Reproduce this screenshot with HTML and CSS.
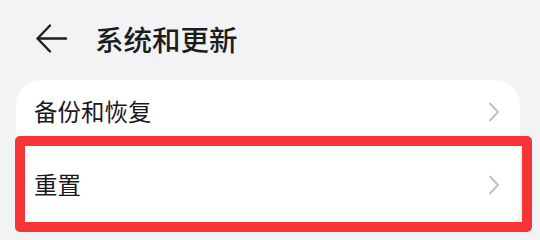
FILE: index.html
```html
<!DOCTYPE html>
<html lang="zh-CN">
<head>
<meta charset="utf-8">
<link rel="stylesheet" href="styles.css">
</head>
<body>
<header class="topbar">
  <svg class="back" width="32" height="30" viewBox="0 0 32 30" fill="none" stroke="#1f1f1f" stroke-width="2.4" stroke-linecap="round" stroke-linejoin="round">
    <path d="M2 14.5 H30"/>
    <path d="M14 1.5 L1.5 14.5 L14 27.5"/>
  </svg>
  <h1 class="title">系统和更新</h1>
</header>
<section class="card">
  <div class="row row-first">
    <span class="label">备份和恢复</span>
    <svg class="chev" width="12" height="20" viewBox="0 0 12 20" fill="none" stroke="#c2c2c2" stroke-width="2" stroke-linecap="round" stroke-linejoin="round"><path d="M2 1.5 L10 10 L2 18.5"/></svg>
  </div>
  <div class="row row-second">
    <span class="label">重置</span>
    <svg class="chev" width="12" height="20" viewBox="0 0 12 20" fill="none" stroke="#c2c2c2" stroke-width="2" stroke-linecap="round" stroke-linejoin="round"><path d="M2 1.5 L10 10 L2 18.5"/></svg>
  </div>
  <div class="highlight"></div>
</section>
</body>
</html>
```
FILE: styles.css
```css
html, body {
  margin: 0;
  padding: 0;
}
body {
  width: 540px;
  height: 240px;
  overflow: hidden;
  background: #f1f3f5;
  font-family: "Noto Sans CJK SC", "Noto Sans", sans-serif;
  color: #1a1a1a;
}
.topbar {
  height: 80px;
  display: flex;
  align-items: center;
  padding-left: 36px;
  box-sizing: border-box;
}
.back {
  display: block;
  margin-top: -2px;
}
.title {
  margin: 0 0 0 27px;
  font-size: 28.5px;
  font-weight: 500;
  line-height: 1;
  color: #1c1c1c;
  margin-top: -2px;
}
.card {
  position: relative;
  margin: 0 20px 0 16px;
  background: #ffffff;
  border-radius: 24px;
  height: 152px;
}
.row {
  display: flex;
  align-items: center;
  justify-content: space-between;
  padding: 0 20px 0 18px;
}
.row-first {
  height: 64px;
  box-shadow: inset 0 -1px 0 #f6f6f6;
}
.row-second {
  height: 82px;
}
.label {
  font-size: 23.5px;
  line-height: 1;
  color: #1a1a1a;
}
.chev {
  display: block;
}
.highlight {
  position: absolute;
  left: -1px;
  top: 56px;
  width: 517px;
  height: 96px;
  box-sizing: border-box;
  border: 10px solid #f73538;
  border-radius: 5px;
}
```
